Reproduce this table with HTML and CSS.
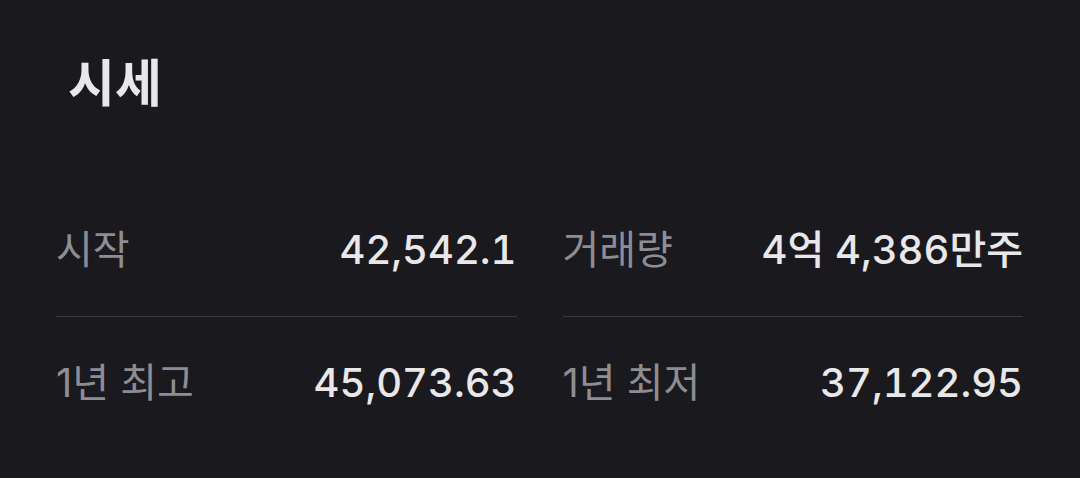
FILE: index.html
```html
<!DOCTYPE html>
<html lang="ko">
<head>
    <meta charset="UTF-8">
    <meta name="viewport" content="width=device-width, initial-scale=1.0">
    <title>시세</title>
    <link rel="stylesheet" href="styles.css">
</head>
<body>
    <section class="quote">
        <h2 class="quote-title">시세</h2>
        <div class="quote-grid">
            <div class="quote-row">
                <span class="label">시작</span>
                <span class="value">42,542.1</span>
            </div>
            <div class="quote-row">
                <span class="label">거래량</span>
                <span class="value">4<span class="unit">억</span> 4,386<span class="unit">만주</span></span>
            </div>
            <div class="quote-row last">
                <span class="label">1년 최고</span>
                <span class="value">45,073.63</span>
            </div>
            <div class="quote-row last">
                <span class="label">1년 최저</span>
                <span class="value">37,122.95</span>
            </div>
        </div>
    </section>
</body>
</html>
```
FILE: styles.css
```css
:root {
    --bg-color: #1a191e;
    --label-color: #8e8d93;
    --value-color: #e8e8ea;
    --line-color: #3a393f;
}
html, body {
    margin: 0;
    padding: 0;
    background-color: var(--bg-color);
}
body {
    font-family: Inter, "Noto Sans CJK KR", "Noto Sans", sans-serif;
    color: var(--value-color);
}
.quote {
    padding: 50px 57px 0 56px;
}
.quote-title {
    margin: 0 0 74px 12px;
    font-family: "Noto Sans CJK KR", sans-serif;
    font-size: 51px;
    line-height: 60px;
    font-weight: 700;
    color: var(--value-color);
}
.quote-grid {
    display: grid;
    grid-template-columns: 1fr 1fr;
    column-gap: 46px;
}
.quote-row {
    display: flex;
    justify-content: space-between;
    align-items: center;
    padding: 42px 0;
    line-height: 48px;
    font-size: 40px;
    border-bottom: 1px solid var(--line-color);
}
.quote-row.last {
    border-bottom: none;
}
.label {
    color: var(--label-color);
    font-weight: 400;
}
.value {
    color: var(--value-color);
    font-size: 40px;
    font-weight: 500;
    font-variant-numeric: tabular-nums;
}
.unit {
    font-size: 40px;
}
```
